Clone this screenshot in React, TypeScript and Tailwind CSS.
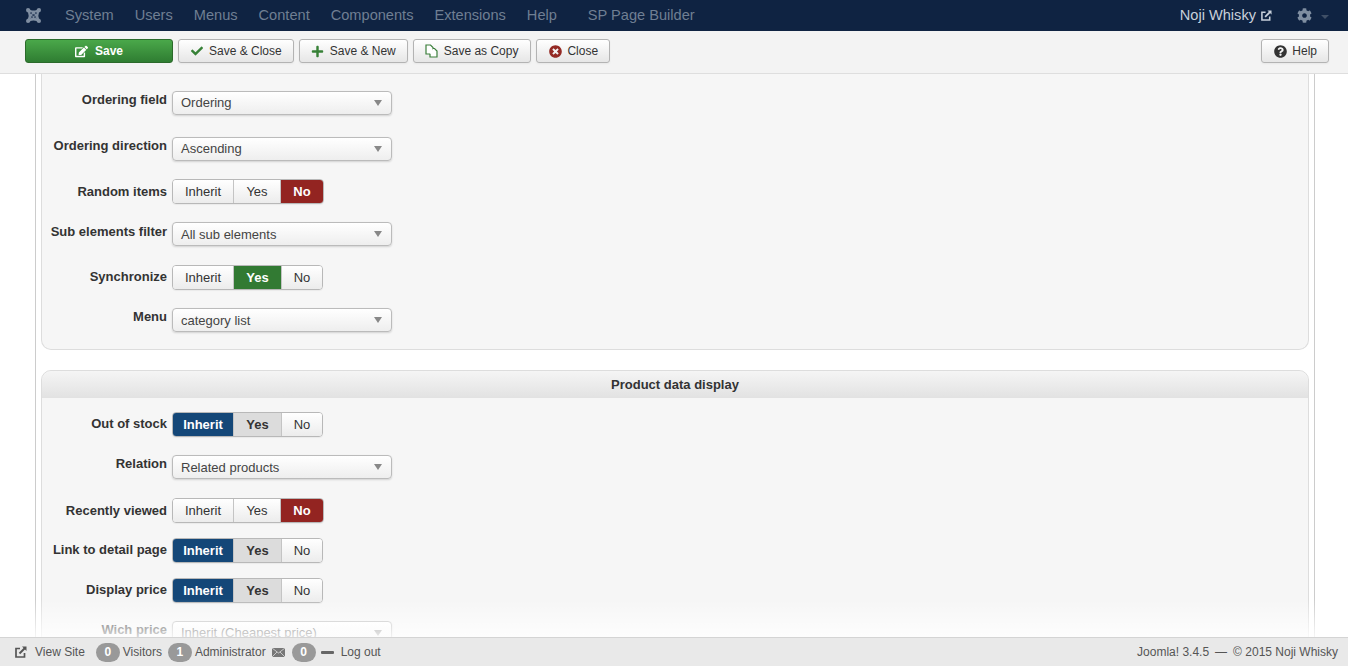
import React from 'react';
import { FaCheck, FaPlus, FaTimesCircle, FaQuestionCircle, FaCog, FaEdit } from 'react-icons/fa';

const navItems = ['System', 'Users', 'Menus', 'Content', 'Components', 'Extensions', 'Help'];

const JoomlaLogo = () => (
  <svg width="17" height="17" viewBox="0 0 17 17">
    <path d="M1 3 Q1 1 3 1 Q5 1 5.5 3 Q8.5 4.2 11.5 3 Q12 1 14 1 Q16 1 16 3 Q16 5 14 5.5 Q12.8 8.5 14 11.5 Q16 12 16 14 Q16 16 14 16 Q12 16 11.5 14 Q8.5 12.8 5.5 14 Q5 16 3 16 Q1 16 1 14 Q1 12 3 11.5 Q4.2 8.5 3 5.5 Q1 5 1 3 Z" fill="#7f8ea1" />
    <path d="M5.5 5.5 L11.5 11.5 M11.5 5.5 L5.5 11.5" stroke="#2c3f5c" strokeWidth="1.6" strokeDasharray="1.6 1.2" />
  </svg>
);

// outlined double page, the toolbar's copy glyph
const CopyIcon = () => (
  <svg width="13" height="14" viewBox="0 0 13 14" fill="none" stroke="#3b7f3b" strokeWidth="1.2">
    <path d="M1 1 H5.5 L8 3.5 V10 H1 Z" fill="#fff" />
    <path d="M8 4.5 H9.5 L12 7 V13 H5 V10" fill="#fff" />
  </svg>
);

const ExternalIcon = ({ size, className = '' }: { size: number; className?: string }) => (
  <svg width={size} height={size} viewBox="0 0 12 12" className={className} fill="none" stroke="currentColor">
    <path d="M9.5 7 V11 H1 V2.5 H5" strokeWidth="1.7" />
    <path d="M4.5 7.5 L10 2" strokeWidth="2" />
    <path d="M7 0.5 H11.5 V5 Z" fill="currentColor" stroke="none" />
  </svg>
);

const ToolButton = ({ icon, label, className = '' }: { icon: React.ReactNode; label: string; className?: string }) => (
  <div className={`flex h-6 items-center gap-[5px] rounded-[3px] border border-[#b3b3b3] bg-gradient-to-b from-white to-[#e6e6e6] pl-[11px] text-[12px] text-[#333] shadow-[0_1px_2px_rgba(0,0,0,0.05)] ${className}`}>
    <span className="flex w-[14px] items-center justify-center">{icon}</span>
    <span>{label}</span>
  </div>
);

const Select = ({ value, low }: { value: string; low?: boolean }) => (
  <div className="flex h-6 w-[220px] items-center justify-between rounded-[4px] border border-[#bbb] bg-gradient-to-b from-white to-[#eeeeee] pl-2 pr-[8px] text-[13px] text-[#444] shadow-[0_1px_2px_rgba(0,0,0,0.15)]">
    <span className={low ? 'pt-[2px]' : ''}>{value}</span>
    <span className="mr-[1px] h-0 w-0 border-x-[4px] border-t-[6px] border-x-transparent border-t-[#888]" />
  </div>
);

type Choice = 'Inherit' | 'Yes' | 'No';

const Toggle = ({ active, yesPressed }: { active: Choice; yesPressed?: boolean }) => {
  const base = 'flex h-full items-center justify-center text-[13px]';
  const idle = 'bg-gradient-to-b from-white to-[#ececec] text-[#333]';
  return (
    <div className="flex h-[25px] overflow-hidden rounded-[4px] border border-[#b8b8b8] shadow-[0_1px_1px_rgba(0,0,0,0.05)]">
      <div className={`${base} w-[61px] border-r border-[#c4c4c4] ${active === 'Inherit' ? 'bg-[#144778] font-bold text-white' : idle}`}>Inherit</div>
      <div className={`${base} ${active === 'No' ? 'w-[47px]' : 'w-[48px]'} border-r border-[#c4c4c4] ${active === 'Yes' ? 'bg-[#327a33] font-bold text-white' : yesPressed ? 'bg-[#dcdcdc] font-bold text-[#333]' : idle}`}>Yes</div>
      <div className={`${base} ${active === 'No' ? 'w-[42px] bg-[#932421] font-bold text-white' : `w-[40px] ${idle}`}`}>No</div>
    </div>
  );
};

const Row = ({ label, className, labelPad = '', children }: { label: string; className: string; labelPad?: string; children: React.ReactNode }) => (
  <div className={`flex gap-[5px] pl-[4px] ${className}`}>
    <label className={`w-[121px] shrink-0 self-start whitespace-nowrap text-right text-[13px] font-bold leading-[18px] text-[#333] ${labelPad}`}>
      {label}
    </label>
    {children}
  </div>
);

const Badge = ({ n }: { n: number }) => (
  <span className="flex h-[19px] w-6 items-center justify-center rounded-full bg-[#999] text-[12px] font-bold text-white">{n}</span>
);

export default function App() {
  return (
    <div className="flex h-[666px] w-[1348px] flex-col overflow-hidden bg-white font-['Liberation_Sans',Arial,sans-serif]">
      {/* top nav */}
      <nav className="flex h-[31px] shrink-0 items-center bg-[#0f2342] pl-[25px] pr-[19px] text-[14.6px] text-[#6f7f93]">
        <JoomlaLogo />
        <div className="ml-[23px] flex gap-[21px]">
          {navItems.map((item) => (
            <span key={item}>{item}</span>
          ))}
        </div>
        <span className="ml-[31px]">SP Page Builder</span>
        <div className="ml-auto flex items-center text-[#c8d0da]">
          <span>Noji Whisky</span>
          <ExternalIcon size={11} className="ml-[5px]" />
          <FaCog size={15} className="ml-[25px] text-[#7f8ea1]" />
          <span className="ml-[9px] mt-[3px] h-0 w-0 border-x-[4px] border-t-[4px] border-x-transparent border-t-[#3f4f66]" />
        </div>
      </nav>

      {/* toolbar */}
      <div className="flex h-[43px] shrink-0 items-start gap-[5px] border-b border-[#dedede] bg-[#f3f3f3] pl-[25px] pr-[19px] pt-[8px]">
        <div className="flex h-6 w-[148px] items-center justify-center gap-[7px] rounded-[3px] border border-[#2b6a2b] bg-gradient-to-b from-[#4aa84a] to-[#2f7d32] text-[12px] font-bold text-white">
          <FaEdit size={13} />
          <span>Save</span>
        </div>
        <ToolButton className="pr-[11px]" icon={<FaCheck size={12} className="text-[#378137]" />} label="Save & Close" />
        <ToolButton className="pr-[11px]" icon={<FaPlus size={13} className="text-[#378137]" />} label="Save & New" />
        <ToolButton className="pr-[12px]" icon={<CopyIcon />} label="Save as Copy" />
        <ToolButton className="pr-[11px]" icon={<FaTimesCircle size={13} className="text-[#942a25]" />} label="Close" />
        <ToolButton className="ml-auto pr-[11px]" icon={<FaQuestionCircle size={13} className="text-[#333]" />} label="Help" />
      </div>

      {/* scrolled form area */}
      <main className="relative min-h-0 flex-1 overflow-hidden pl-[35px] pr-[33px]">
        <div className="h-[700px] border-x border-[#ccc] px-[5px]">
          <section className="rounded-b-[10px] border-x border-b border-[#ddd] bg-[#f6f6f6] pb-[17px] pt-[17px]">
            <Row label="Ordering field" className="mb-[22px]"><Select value="Ordering" /></Row>
            <Row label="Ordering direction" className="mb-[18px]"><Select value="Ascending" /></Row>
            <Row label="Random items" labelPad="pt-[4px]" className="mb-[18px]"><Toggle active="No" /></Row>
            <Row label="Sub elements filter" labelPad="pt-[1px]" className="mb-[19px]"><Select value="All sub elements" low /></Row>
            <Row label="Synchronize" labelPad="pt-[3px]" className="mb-[18px]"><Toggle active="Yes" /></Row>
            <Row label="Menu" className=""><Select value="category list" low /></Row>
          </section>

          <section className="mt-[20px] rounded-[10px] border border-[#ddd] bg-[#f6f6f6]">
            <h3 className="mb-[14px] flex h-[27px] items-center justify-center rounded-t-[10px] bg-gradient-to-b from-[#f5f5f5] to-[#e2e2e2] text-[13px] font-bold text-[#333]">
              Product data display
            </h3>
            <Row label="Out of stock" labelPad="pt-[3px]" className="mb-[18px]"><Toggle active="Inherit" yesPressed /></Row>
            <Row label="Relation" className="mb-[19px]"><Select value="Related products" low /></Row>
            <Row label="Recently viewed" labelPad="pt-[4px]" className="mb-[15px]"><Toggle active="No" /></Row>
            <Row label="Link to detail page" labelPad="pt-[3px]" className="mb-[15px]"><Toggle active="Inherit" yesPressed /></Row>
            <Row label="Display price" labelPad="pt-[3px]" className="mb-[18px]"><Toggle active="Inherit" yesPressed /></Row>
            <Row label="Wich price" className="mb-[18px]"><Select value="Inherit (Cheapest price)" /></Row>
          </section>
        </div>
        {/* fade above the status bar */}
        <div className="absolute inset-x-0 bottom-0 h-[38px] bg-gradient-to-b from-white/0 to-white/80" />
      </main>

      {/* status bar */}
      <footer className="flex h-[29px] shrink-0 items-center border-t border-[#d4d4d4] bg-[#e9e9e9] pl-[15px] pr-[10px] text-[12px] text-[#555]">
        <ExternalIcon size={12} />
        <span className="ml-[8px]">View Site</span>
        <div className="ml-[11px]"><Badge n={0} /></div>
        <span className="ml-[3px]">Visitors</span>
        <div className="ml-[6px]"><Badge n={1} /></div>
        <span className="ml-[3px]">Administrator</span>
        <svg className="ml-[6px]" width="13" height="9" viewBox="0 0 13 9">
          <rect width="13" height="9" fill="#777" />
          <path d="M0 0 L6.5 5 L13 0 M0 9 L5 4 M13 9 L8 4" stroke="#ddd" strokeWidth="0.8" fill="none" />
        </svg>
        <div className="ml-[7px]"><Badge n={0} /></div>
        <span className="ml-[5px] h-[3px] w-[13px] rounded-[1px] bg-[#666]" />
        <span className="ml-[7px]">Log out</span>
        <div className="ml-auto flex gap-[6px]">
          <span>Joomla! 3.4.5</span>
          <span>—</span>
          <span>© 2015 Noji Whisky</span>
        </div>
      </footer>
    </div>
  );
}
